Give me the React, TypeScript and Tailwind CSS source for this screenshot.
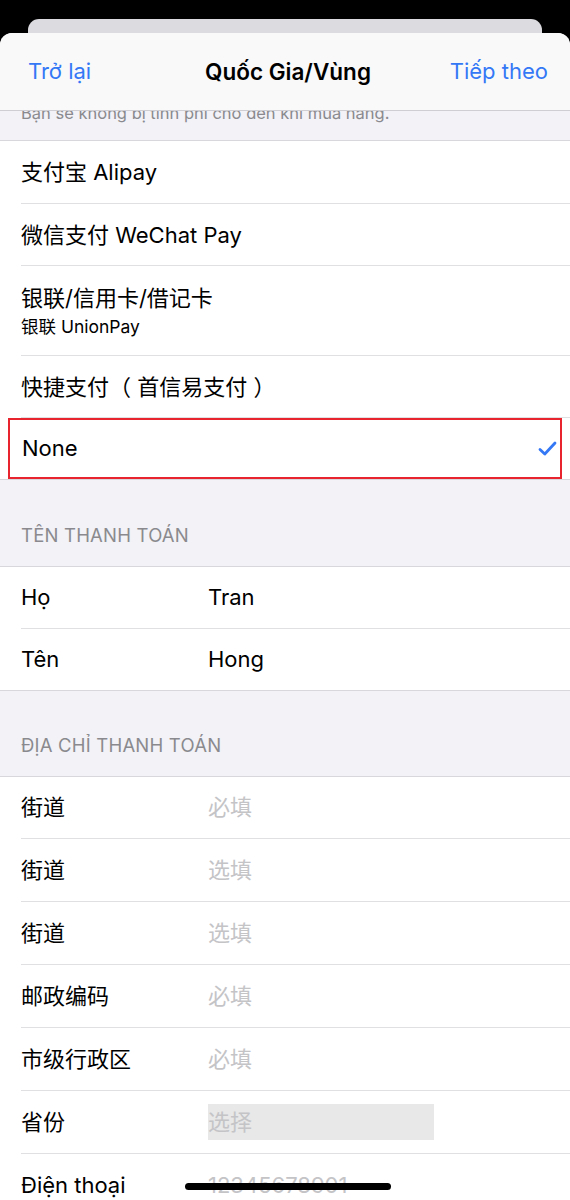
import React from "react";

type Field = {
  label: string;
  value: string;
  placeholder?: boolean;
  picker?: boolean;
};

const methods = [
  { title: "支付宝 Alipay", h: "h-[63px]" },
  { title: "微信支付 WeChat Pay", h: "h-[62px]" },
  { title: "银联/信用卡/借记卡", sub: "银联 UnionPay", h: "h-[90px]" },
  { title: "快捷支付（ 首信易支付 ）", h: "h-[62px]" },
];

const nameFields: Field[] = [
  { label: "Họ", value: "Tran" },
  { label: "Tên", value: "Hong" },
];

const addressFields: Field[] = [
  { label: "街道", value: "必填", placeholder: true },
  { label: "街道", value: "选填", placeholder: true },
  { label: "街道", value: "选填", placeholder: true },
  { label: "邮政编码", value: "必填", placeholder: true },
  { label: "市级行政区", value: "必填", placeholder: true },
  { label: "省份", value: "选择", placeholder: true, picker: true },
  { label: "Điện thoại", value: "12345678901", placeholder: true },
];

const font = { fontFamily: '"Inter", "Noto Sans CJK SC", sans-serif' };

const SectionHeader: React.FC<{ title: string; h: string }> = ({ title, h }) => (
  <div className={`${h} flex items-end pb-[16px] px-[21px] bg-[#f2f2f7] border-b border-[#d8d8dc]`}>
    <span className="text-[18.5px] text-[#8a8a8e] tracking-[0.2px]">{title}</span>
  </div>
);

const FieldRow: React.FC<{ field: Field; h: string; last?: boolean }> = ({ field, h, last }) => (
  <div className="pl-[21px] bg-white">
    <div className={`${h} flex items-center ${last ? "" : "border-b border-[#e0e0e3]"}`}>
      <span className="w-[187px] shrink-0 text-[22px] text-black">{field.label}</span>
      {field.picker ? (
        <span className="w-[226px] h-[36px] flex items-center bg-[#e8e8e8] text-[22px] text-[#c4c4c7]">
          {field.value}
        </span>
      ) : (
        <span
          className={`text-[22px] ${field.placeholder ? "text-[#c4c4c7]" : "text-black"}`}
        >
          {field.value}
        </span>
      )}
    </div>
  </div>
);

export default function App() {
  return (
    <div className="relative w-[570px] h-[1200px] overflow-hidden bg-black" style={font}>
      {/* card stacked behind the sheet */}
      <div className="mx-[28px] mt-[19px] h-[30px] rounded-t-[11px] bg-[#dcdce0]" />

      <div className="-mt-[16px] rounded-t-[12px] overflow-hidden bg-[#f2f2f7]">
        {/* nav bar */}
        <div className="h-[78px] px-[28px] flex items-center bg-[#f9f9fa] border-b border-[#cfcfd3]">
          <span className="flex-1 text-[22px] text-[#3478f6]">Trở lại</span>
          <span className="text-[22.5px] font-semibold text-black">Quốc Gia/Vùng</span>
          <span className="flex-1 text-right text-[22px] text-[#3478f6] -mr-[6px]">Tiếp theo</span>
        </div>

        {/* footer of the section above, scrolled under the nav */}
        <div className="h-[30px] overflow-hidden px-[21px] border-b border-[#d8d8dc]">
          <p className="-mt-[10px] text-[16.5px] text-[#8a8a8e] leading-[24px]">
            Bạn sẽ không bị tính phí cho đến khi mua hàng.
          </p>
        </div>

        {/* payment methods */}
        <div className="bg-white">
          {methods.map((m) => (
            <div key={m.title} className="pl-[21px]">
              <div className={`${m.h} flex flex-col justify-center border-b border-[#e0e0e3]`}>
                <span className="text-[22px] text-black leading-[28px]">{m.title}</span>
                {m.sub && (
                  <span className="text-[17.5px] text-black leading-[22px] mt-[4px]">{m.sub}</span>
                )}
              </div>
            </div>
          ))}
          <div className="h-[62px] px-[8px] border-b border-[#d8d8dc]">
            <div className="h-full flex items-center justify-between pl-[12px] pr-[3px] border-2 border-[#e8242e]">
              <span className="text-[22px] text-black">None</span>
              <svg width="19" height="15" viewBox="0 0 19 15" fill="none">
                <path
                  d="M2 8.5 L6.8 13 L17 2"
                  stroke="#3478f6"
                  strokeWidth="2.8"
                  strokeLinecap="round"
                  strokeLinejoin="round"
                />
              </svg>
            </div>
          </div>
        </div>

        <SectionHeader title="TÊN THANH TOÁN" h="h-[87px]" />
        <div className="border-b border-[#d8d8dc]">
          {nameFields.map((f, i) => (
            <FieldRow
              key={f.label}
              field={f}
              h={i === 0 ? "h-[62px]" : "h-[61px]"}
              last={i === nameFields.length - 1}
            />
          ))}
        </div>

        <SectionHeader title="ĐỊA CHỈ THANH TOÁN" h="h-[86px]" />
        <div>
          {addressFields.map((f, i) => (
            <FieldRow
              key={i}
              field={f}
              h={i === 0 ? "h-[62px]" : "h-[63px]"}
              last={i === addressFields.length - 1}
            />
          ))}
        </div>
      </div>

      {/* home indicator */}
      <div className="absolute left-[185px] top-[1183px] w-[206px] h-[7px] rounded-full bg-black" />
    </div>
  );
}
